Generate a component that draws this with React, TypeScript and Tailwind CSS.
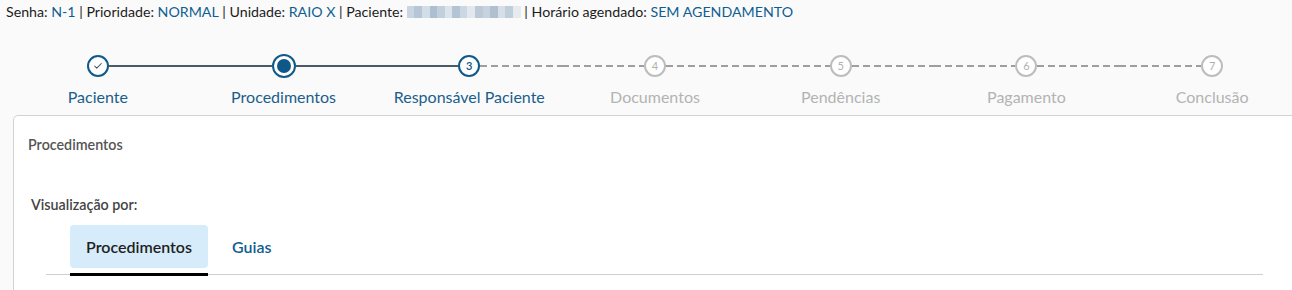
import { Check } from "lucide-react";

type StepState = "done" | "active" | "current" | "todo";

const steps: { label: string; state: StepState }[] = [
  { label: "Paciente", state: "done" },
  { label: "Procedimentos", state: "active" },
  { label: "Responsável Paciente", state: "current" },
  { label: "Documentos", state: "todo" },
  { label: "Pendências", state: "todo" },
  { label: "Pagamento", state: "todo" },
  { label: "Conclusão", state: "todo" },
];

const blurBlocks = [
  "#c9d5e1", "#b7c6d6", "#d3dde7", "#aebfd1", "#c2cfdc", "#dbe3eb", "#b4c4d4", "#cbd7e2",
  "#e2e8ee", "#bccad8", "#c6d2de", "#b0c0d1", "#d6dfe8", "#c0cddb", "#e6ebf0",
];

function Line({ kind }: { kind: "solid" | "dashed" | "none" }) {
  if (kind === "none") return <div className="flex-1" />;
  if (kind === "solid") return <div className="flex-1 h-[2px] bg-[#4a5b66]" />;
  return (
    <div className="flex-1 h-[2px] bg-[repeating-linear-gradient(to_right,#9e9e9e_0px,#9e9e9e_7px,transparent_7px,transparent_11px)]" />
  );
}

function StepCircle({ state, n }: { state: StepState; n: number }) {
  if (state === "done")
    return (
      <div className="w-[22px] h-[22px] rounded-full border-2 border-[#0f5a8a] bg-white flex items-center justify-center">
        <Check className="w-[10px] h-[10px] text-[#3d4f5c]" strokeWidth={2.5} />
      </div>
    );
  if (state === "active")
    return (
      <div className="w-[24px] h-[24px] rounded-full border-2 border-[#0f5a8a] bg-white flex items-center justify-center">
        <div className="w-[14px] h-[14px] rounded-full bg-[#0d5789]" />
      </div>
    );
  const blue = state === "current";
  return (
    <div
      className={
        blue
          ? "w-[22px] h-[22px] rounded-full border-2 border-[#0f5a8a] bg-white flex items-center justify-center text-[11px] text-[#0f4f7c] font-semibold"
          : "w-[22px] h-[22px] rounded-full border-2 border-[#bdbdbd] bg-white flex items-center justify-center text-[11px] text-[#b0b0b0]"
      }
    >
      {n}
    </div>
  );
}

export default function App() {
  return (
    <div className="w-[1292px] h-[290px] overflow-hidden bg-[#fafafa] font-['Lato','Open_Sans',sans-serif]">
      {/* header info */}
      <div className="flex items-center px-[6px] pt-[1px] h-[22px] text-[14.2px] text-[#1c1c1c] whitespace-nowrap">
        <span>Senha:&nbsp;</span>
        <span className="text-[#0f5e91]">N-1</span>
        <span>&nbsp;|&nbsp;Prioridade:&nbsp;</span>
        <span className="text-[#0f5e91]">NORMAL</span>
        <span>&nbsp;|&nbsp;Unidade:&nbsp;</span>
        <span className="text-[#0f5e91]">RAIO X</span>
        <span>&nbsp;|&nbsp;Paciente:&nbsp;</span>
        <span className="flex h-[12px] w-[114px] overflow-hidden">
          {blurBlocks.map((c, i) => (
            <span key={i} className="flex-1 h-full" style={{ backgroundColor: c }} />
          ))}
        </span>
        <span>&nbsp;|&nbsp;Horário agendado:&nbsp;</span>
        <span className="text-[#0f5e91]">SEM AGENDAMENTO</span>
      </div>

      {/* stepper */}
      <div className="ml-[5px] w-[1300px] grid grid-cols-7 mt-[32px]">
        {steps.map((s, i) => {
          const left = i === 0 ? "none" : i <= 2 ? "solid" : "dashed";
          const right = i === steps.length - 1 ? "none" : i < 2 ? "solid" : "dashed";
          const labelColor = s.state === "todo" ? "text-[#b3b3b3]" : "text-[#1b5e8c]";
          return (
            <div key={s.label} className="flex flex-col items-center">
              <div className="flex items-center w-full h-[24px]">
                <Line kind={left} />
                <StepCircle state={s.state} n={i + 1} />
                <Line kind={right} />
              </div>
              <div className={`mt-[9px] text-[16px] leading-[20px] whitespace-nowrap ${labelColor}`}>{s.label}</div>
            </div>
          );
        })}
      </div>

      {/* card */}
      <div className="ml-[13px] mt-[8px] w-[1300px] h-[200px] bg-white border border-[#d2d2d2] rounded-tl-[5px] pt-[21px]">
        <div className="pl-[14px] text-[14.3px] leading-[16px] font-semibold text-[#555]">Procedimentos</div>
        <div className="pl-[17px] mt-[43px] text-[14.3px] leading-[18px] font-semibold text-[#444]">Visualização por:</div>
        <div className="ml-[32px] w-[1217px] mt-[11px] flex gap-[8px] pl-[24px] border-b border-[#cfcfcf]">
          <div className="relative h-[49px]">
            <div className="h-[43px] px-[16px] rounded-[4px] bg-[#d6ecfa] flex items-center text-[16px] font-semibold text-[#1f1f1f]">
              Procedimentos
            </div>
            <div className="absolute left-0 right-0 bottom-[-2px] h-[3px] bg-black" />
          </div>
          <div className="h-[43px] px-[16px] flex items-center text-[16px] font-semibold text-[#0f5e91]">Guias</div>
        </div>
      </div>
    </div>
  );
}
